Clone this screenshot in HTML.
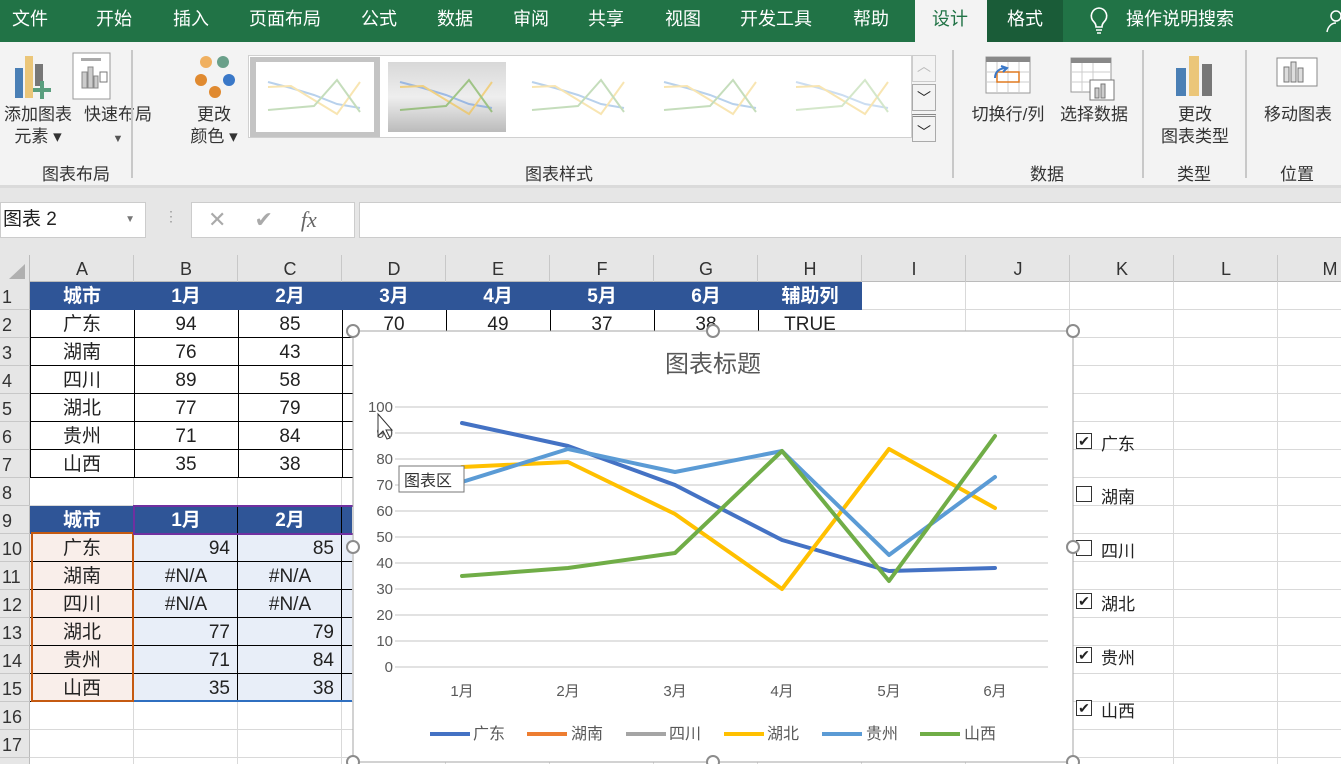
<!DOCTYPE html>
<html><head><meta charset="utf-8">
<style>
*{margin:0;padding:0;box-sizing:border-box}
body{width:1341px;height:764px;overflow:hidden;position:relative;background:#fff;font-family:"Liberation Sans","Noto Sans CJK SC",sans-serif;color:#222}
.a{position:absolute}
.tab{position:absolute;top:0;height:42px;line-height:38px;color:#fff;font-size:18px}
.rb{position:absolute;font-size:17px;color:#333;text-align:center;line-height:22px}
.grp{position:absolute;top:160px;font-size:17px;color:#333}
.sep{position:absolute;top:50px;width:2px;height:128px;background:#c8c8c8}
.ch{position:absolute;top:255px;height:27px;line-height:29px;font-size:18px;color:#333;text-align:center;width:104px}
.rh{position:absolute;left:0;width:30px;height:28px;line-height:30px;font-size:18px;color:#333;padding-left:2px}
.c{position:absolute;height:28px;line-height:29px;font-size:19px;text-align:center;width:104px}
.hd{background:#2f5597;color:#fff;font-weight:bold}
.cb{position:absolute;left:1076px;width:16px;height:16px;border:1px solid #333;background:#fff;font-size:14px;line-height:14px;text-align:center}
.cl{position:absolute;left:1101px;font-size:17px}
</style></head><body>
<!-- top bar -->
<div class="a" style="left:0;top:0;width:1341px;height:42px;background:#217346"></div>
<div class="tab" style="left:12px">文件</div>
<div class="tab" style="left:96px">开始</div>
<div class="tab" style="left:173px">插入</div>
<div class="tab" style="left:249px">页面布局</div>
<div class="tab" style="left:361px">公式</div>
<div class="tab" style="left:437px">数据</div>
<div class="tab" style="left:513px">审阅</div>
<div class="tab" style="left:588px">共享</div>
<div class="tab" style="left:665px">视图</div>
<div class="tab" style="left:740px">开发工具</div>
<div class="tab" style="left:853px">帮助</div>
<div class="a" style="left:915px;top:0;width:72px;height:42px;background:#f3f3f3"></div>
<div class="tab" style="left:932px;color:#217346">设计</div>
<div class="a" style="left:987px;top:0;width:76px;height:42px;background:#1a5c38"></div>
<div class="tab" style="left:1007px">格式</div>
<svg class="a" style="left:1088px;top:6px" width="22" height="30"><path d="M11 2a8 8 0 0 0-5 14c1 1 2 3 2 5h6c0-2 1-4 2-5a8 8 0 0 0-5-14zM8 24h6M9 27h4" fill="none" stroke="#fff" stroke-width="1.6"/></svg>
<div class="tab" style="left:1126px">操作说明搜索</div>
<svg class="a" style="left:1326px;top:8px" width="15" height="26"><circle cx="10" cy="8" r="5" fill="none" stroke="#fff" stroke-width="1.5"/><path d="M1 24c1-6 5-9 9-9" fill="none" stroke="#fff" stroke-width="1.5"/></svg>
<!-- ribbon -->
<div class="a" style="left:0;top:42px;width:1341px;height:143px;background:#f3f3f3"></div>
<div class="a" style="left:0;top:185px;width:1341px;height:3px;background:#dadada"></div>
<svg class="a" style="left:14px;top:54px" width="40" height="48"><rect x="1" y="14" width="8" height="30" fill="#4a7fb5"/><rect x="11" y="2" width="8" height="42" fill="#ebc679"/><rect x="21" y="10" width="8" height="22" fill="#777"/><rect x="26" y="27" width="4" height="18" fill="#5a9e7e"/><rect x="19" y="34" width="18" height="4" fill="#5a9e7e"/></svg>
<svg class="a" style="left:72px;top:52px" width="40" height="48"><rect x="1" y="1" width="37" height="46" fill="#fff" stroke="#999"/><rect x="9" y="6" width="20" height="3" fill="#aaa"/><rect x="10" y="20" width="5" height="16" fill="#ccc" stroke="#888"/><rect x="16" y="15" width="5" height="21" fill="#ccc" stroke="#888"/><rect x="22" y="24" width="4" height="12" fill="#ccc" stroke="#888"/><rect x="28" y="20" width="7" height="10" fill="#fff" stroke="#777"/></svg>
<div class="rb" style="left:2px;top:104px;width:72px">添加图表<br>元素 ▾</div>
<div class="rb" style="left:80px;top:104px;width:76px">快速布局<br><span style="font-size:11px;color:#555">▼</span></div>
<div class="grp" style="left:42px">图表布局</div>
<div class="sep" style="left:130px;left:131px"></div>
<svg class="a" style="left:190px;top:54px" width="48" height="45"><circle cx="16" cy="8" r="6" fill="#f0b060"/><circle cx="33" cy="8" r="6" fill="#6aa08a"/><circle cx="11" cy="26" r="6" fill="#e08a30"/><circle cx="39" cy="26" r="6" fill="#3a78c8"/><circle cx="25" cy="38" r="6" fill="#e08a30"/></svg>
<div class="rb" style="left:184px;top:104px;width:60px">更改<br>颜色 ▾</div>
<div class="a" style="left:248px;top:55px;width:664px;height:83px;background:#fff;border:1px solid #d0d0d0"></div>
<div class="a" style="left:250px;top:57px;width:130px;height:80px;background:#c4c4c4"></div>
<div class="a" style="left:256px;top:62px;width:118px;height:70px;background:#fff"></div>
<div class="a" style="left:388px;top:62px;width:118px;height:70px;background:linear-gradient(#d8d8d8,#eee,#bbb)"></div>
<svg class="a" style="left:256px;top:62px" width="640" height="70">
<g fill="none" stroke-width="2" opacity=".6">
<g><path d="M12 20 35 26 58 33 81 42 104 46" stroke="#8ab4e0"/><path d="M12 25 35 24 58 38 81 52 104 20" stroke="#f5d580"/><path d="M12 48 35 46 58 44 81 18 104 50" stroke="#a0c890"/></g>
<g transform="translate(132 0)"><path d="M12 20 35 26 58 33 81 42 104 46" stroke="#6a9ae0"/><path d="M12 25 35 24 58 38 81 52 104 20" stroke="#f5c040"/><path d="M12 48 35 46 58 44 81 18 104 50" stroke="#70ad47"/></g>
<g transform="translate(264 0)"><path d="M12 20 35 26 58 33 81 42 104 46" stroke="#8ab4e0"/><path d="M12 25 35 24 58 38 81 52 104 20" stroke="#f5d580"/><path d="M12 48 35 46 58 44 81 18 104 50" stroke="#a0c890"/></g>
<g transform="translate(396 0)"><path d="M12 20 35 26 58 33 81 42 104 46" stroke="#8ab4e0"/><path d="M12 25 35 24 58 38 81 52 104 20" stroke="#f5d580"/><path d="M12 48 35 46 58 44 81 18 104 50" stroke="#a0c890"/></g>
<g transform="translate(528 0)"><path d="M12 20 35 26 58 33 81 42 104 46" stroke="#aac8e8"/><path d="M12 25 35 24 58 38 81 52 104 20" stroke="#f5d580"/><path d="M12 48 35 46 58 44 81 18 104 50" stroke="#b8d8a8"/></g>
</g></svg>
<div class="a" style="left:912px;top:55px;width:24px;height:27px;border:1px solid #ccc;background:#f3f3f3;color:#bbb;text-align:center;font-size:14px">︿</div>
<div class="a" style="left:912px;top:84px;width:24px;height:27px;border:1px solid #aaa;background:#f3f3f3;text-align:center;font-size:14px;line-height:26px">﹀</div>
<div class="a" style="left:912px;top:114px;width:24px;height:28px;border:1px solid #aaa;background:#f3f3f3;text-align:center;font-size:14px;line-height:30px;border-top:3px double #888">﹀</div>
<div class="grp" style="left:525px">图表样式</div>
<div class="sep" style="left:952px"></div>
<svg class="a" style="left:985px;top:56px" width="48" height="40"><rect x="1" y="1" width="44" height="36" fill="#fff" stroke="#999"/><rect x="1" y="1" width="44" height="5" fill="#888"/><path d="M1 16h44M1 26h44M12 6v31M23 6v31M34 6v31" stroke="#ccc"/><rect x="12" y="16" width="22" height="10" fill="none" stroke="#e07a20" stroke-width="1.5"/><path d="M10 22c0-6 4-10 12-10M16 10l6 2-4 4" fill="none" stroke="#3a78c8" stroke-width="2"/></svg>
<svg class="a" style="left:1070px;top:56px" width="48" height="46"><rect x="1" y="2" width="40" height="34" fill="#fff" stroke="#999"/><rect x="1" y="2" width="40" height="5" fill="#888"/><path d="M1 16h40M1 26h40M12 7v29M23 7v29" stroke="#ccc"/><rect x="20" y="24" width="24" height="20" fill="#fff" stroke="#777"/><rect x="25" y="32" width="4" height="10" fill="#ccc" stroke="#777"/><rect x="31" y="28" width="4" height="14" fill="#ccc" stroke="#777"/></svg>
<div class="rb" style="left:966px;top:104px;width:84px">切换行/列</div>
<div class="rb" style="left:1054px;top:104px;width:80px">选择数据</div>
<div class="grp" style="left:1030px">数据</div>
<div class="sep" style="left:1142px"></div>
<svg class="a" style="left:1175px;top:56px" width="40" height="40"><rect x="1" y="12" width="10" height="28" fill="#4a7fb5"/><rect x="14" y="0" width="10" height="40" fill="#ebc679"/><rect x="27" y="8" width="10" height="32" fill="#777"/></svg>
<div class="rb" style="left:1155px;top:104px;width:80px">更改<br>图表类型</div>
<div class="grp" style="left:1177px">类型</div>
<div class="sep" style="left:1245px"></div>
<svg class="a" style="left:1276px;top:57px" width="44" height="36"><rect x="1" y="1" width="40" height="28" fill="#fff" stroke="#888"/><rect x="8" y="10" width="5" height="15" fill="#ddd" stroke="#777"/><rect x="15" y="5" width="5" height="20" fill="#ddd" stroke="#777"/><rect x="22" y="11" width="5" height="14" fill="#ddd" stroke="#777"/></svg>
<div class="rb" style="left:1258px;top:104px;width:80px">移动图表</div>
<div class="grp" style="left:1280px">位置</div>
<!-- formula bar -->
<div class="a" style="left:0;top:188px;width:1341px;height:67px;background:#e6e6e6"></div>
<div class="a" style="left:0;top:202px;width:146px;height:36px;background:#fff;border:1px solid #ccc;font-size:19px;line-height:34px;padding-left:2px">图表 2<span style="position:absolute;right:10px;font-size:10px;color:#777">▼</span></div>
<div class="a" style="left:164px;top:208px;color:#999;font-size:14px">⋮</div>
<div class="a" style="left:191px;top:202px;width:164px;height:36px;background:#fff;border:1px solid #ccc;color:#aaa;font-size:22px;line-height:34px"><span style="margin-left:16px">✕</span><span style="margin-left:28px">✔</span><i style="margin-left:28px;font-family:'Liberation Serif',serif;color:#666">fx</i></div>
<div class="a" style="left:359px;top:202px;width:990px;height:36px;background:#fff;border:1px solid #ccc"></div>
<!-- headers -->
<div class="a" style="left:0;top:255px;width:1341px;height:27px;background:#e6e6e6;border-bottom:1px solid #bbb"></div>
<div class="a" style="left:0;top:255px;width:30px;height:509px;background:#e6e6e6;border-right:1px solid #bbb"></div>
<svg class="a" style="left:6px;top:262px" width="20" height="18"><path d="M19 2V17H3Z" fill="#b0b0b0"/></svg>
<div class="ch" style="left:30px">A</div><div class="ch" style="left:134px">B</div><div class="ch" style="left:238px">C</div><div class="ch" style="left:342px">D</div><div class="ch" style="left:446px">E</div><div class="ch" style="left:550px">F</div><div class="ch" style="left:654px">G</div><div class="ch" style="left:758px">H</div><div class="ch" style="left:862px">I</div><div class="ch" style="left:966px">J</div><div class="ch" style="left:1070px">K</div><div class="ch" style="left:1174px">L</div><div class="ch" style="left:1278px">M</div>
<div class="a" style="left:30px;top:255px;width:1311px;height:27px;background:repeating-linear-gradient(90deg,transparent 0 103px,#c8c8c8 103px 104px)"></div>
<div class="rh" style="top:282px">1</div><div class="rh" style="top:310px">2</div><div class="rh" style="top:338px">3</div><div class="rh" style="top:366px">4</div><div class="rh" style="top:394px">5</div><div class="rh" style="top:422px">6</div><div class="rh" style="top:450px">7</div><div class="rh" style="top:478px">8</div><div class="rh" style="top:506px">9</div><div class="rh" style="top:534px">10</div><div class="rh" style="top:562px">11</div><div class="rh" style="top:590px">12</div><div class="rh" style="top:618px">13</div><div class="rh" style="top:646px">14</div><div class="rh" style="top:674px">15</div><div class="rh" style="top:702px">16</div><div class="rh" style="top:730px">17</div>
<div class="a" style="left:0;top:282px;width:30px;height:482px;background:repeating-linear-gradient(180deg,transparent 0 27px,#c8c8c8 27px 28px)"></div>
<!-- grid -->
<div class="a" style="left:30px;top:282px;width:1311px;height:482px;background:repeating-linear-gradient(90deg,transparent 0 103px,#d9d9d9 103px 104px),repeating-linear-gradient(180deg,transparent 0 27px,#d9d9d9 27px 28px)"></div>
<!-- table 1 -->
<div class="a" style="left:30px;top:282px;width:832px;height:28px;background:#2f5597"></div>
<div class="a" style="left:30px;top:310px;width:832px;height:168px;background:#fff;background-image:repeating-linear-gradient(90deg,transparent 0 103px,#000 103px 104px),repeating-linear-gradient(180deg,transparent 0 27px,#000 27px 28px);border-left:1px solid #000"></div>
<div class="a" style="left:30px;top:282px;width:832px;height:28px;background-image:repeating-linear-gradient(90deg,transparent 0 103px,#000 103px 104px)"></div>
<div class="c hd" style="left:30px;top:282px">城市</div><div class="c hd" style="left:134px;top:282px">1月</div><div class="c hd" style="left:238px;top:282px">2月</div><div class="c hd" style="left:342px;top:282px">3月</div><div class="c hd" style="left:446px;top:282px">4月</div><div class="c hd" style="left:550px;top:282px">5月</div><div class="c hd" style="left:654px;top:282px">6月</div><div class="c hd" style="left:758px;top:282px">辅助列</div>
<div class="c" style="left:30px;top:310px">广东</div><div class="c" style="left:134px;top:310px">94</div><div class="c" style="left:238px;top:310px">85</div><div class="c" style="left:342px;top:310px">70</div><div class="c" style="left:446px;top:310px">49</div><div class="c" style="left:550px;top:310px">37</div><div class="c" style="left:654px;top:310px">38</div><div class="c" style="left:758px;top:310px">TRUE</div>
<div class="c" style="left:30px;top:338px">湖南</div><div class="c" style="left:134px;top:338px">76</div><div class="c" style="left:238px;top:338px">43</div>
<div class="c" style="left:30px;top:366px">四川</div><div class="c" style="left:134px;top:366px">89</div><div class="c" style="left:238px;top:366px">58</div>
<div class="c" style="left:30px;top:394px">湖北</div><div class="c" style="left:134px;top:394px">77</div><div class="c" style="left:238px;top:394px">79</div>
<div class="c" style="left:30px;top:422px">贵州</div><div class="c" style="left:134px;top:422px">71</div><div class="c" style="left:238px;top:422px">84</div>
<div class="c" style="left:30px;top:450px">山西</div><div class="c" style="left:134px;top:450px">35</div><div class="c" style="left:238px;top:450px">38</div>
<!-- table 2 -->
<div class="a" style="left:30px;top:506px;width:322px;height:28px;background:#2f5597;background-image:repeating-linear-gradient(90deg,transparent 0 103px,#000 103px 104px)"></div>
<div class="a" style="left:30px;top:534px;width:104px;height:168px;background:#f9eeea"></div>
<div class="a" style="left:134px;top:534px;width:218px;height:168px;background:#e8eef8"></div>
<div class="a" style="left:30px;top:534px;width:322px;height:168px;background-image:repeating-linear-gradient(90deg,transparent 0 103px,#000 103px 104px),repeating-linear-gradient(180deg,transparent 0 27px,#000 27px 28px)"></div>
<div class="a" style="left:31px;top:532px;width:103px;height:170px;border:2px solid #c55a11"></div>
<div class="a" style="left:133px;top:505px;width:220px;height:30px;border:2px solid #7030a0;border-right:none"></div>
<div class="a" style="left:134px;top:700px;width:218px;height:2px;background:#2f6fc0"></div>
<div class="c hd" style="left:30px;top:506px;background:none">城市</div><div class="c hd" style="left:134px;top:506px;background:none">1月</div><div class="c hd" style="left:238px;top:506px;background:none">2月</div>
<div class="c" style="left:30px;top:534px">广东</div><div class="c" style="left:134px;top:534px;text-align:right;padding-right:8px">94</div><div class="c" style="left:238px;top:534px;text-align:right;padding-right:8px">85</div>
<div class="c" style="left:30px;top:562px">湖南</div><div class="c" style="left:134px;top:562px">#N/A</div><div class="c" style="left:238px;top:562px">#N/A</div>
<div class="c" style="left:30px;top:590px">四川</div><div class="c" style="left:134px;top:590px">#N/A</div><div class="c" style="left:238px;top:590px">#N/A</div>
<div class="c" style="left:30px;top:618px">湖北</div><div class="c" style="left:134px;top:618px;text-align:right;padding-right:8px">77</div><div class="c" style="left:238px;top:618px;text-align:right;padding-right:8px">79</div>
<div class="c" style="left:30px;top:646px">贵州</div><div class="c" style="left:134px;top:646px;text-align:right;padding-right:8px">71</div><div class="c" style="left:238px;top:646px;text-align:right;padding-right:8px">84</div>
<div class="c" style="left:30px;top:674px">山西</div><div class="c" style="left:134px;top:674px;text-align:right;padding-right:8px">35</div><div class="c" style="left:238px;top:674px;text-align:right;padding-right:8px">38</div>
<!-- checkboxes -->
<div class="cb" style="top:433px">✔</div><div class="cl" style="top:430px">广东</div>
<div class="cb" style="top:486px"></div><div class="cl" style="top:483px">湖南</div>
<div class="cb" style="top:540px"></div><div class="cl" style="top:537px">四川</div>
<div class="cb" style="top:593px">✔</div><div class="cl" style="top:590px">湖北</div>
<div class="cb" style="top:647px">✔</div><div class="cl" style="top:644px">贵州</div>
<div class="cb" style="top:700px">✔</div><div class="cl" style="top:697px">山西</div>
<!-- chart -->
<svg class="a" style="left:0;top:0" width="1341" height="764" font-family="Liberation Sans,Noto Sans CJK SC,sans-serif">
<rect x="353" y="331" width="720" height="431" fill="#fff" stroke="#a6a6a6"/>
<text x="713" y="372" font-size="24" fill="#595959" text-anchor="middle">图表标题</text>
<g stroke="#d9d9d9" stroke-width="1.5">
<path d="M395 407H1048M395 433H1048M395 459H1048M395 485H1048M395 511H1048M395 537H1048M395 563H1048M395 589H1048M395 615H1048M395 641H1048M395 667H1048"/>
</g>
<g font-size="15" fill="#595959" text-anchor="end">
<text x="393" y="412">100</text><text x="393" y="438">90</text><text x="393" y="464">80</text><text x="393" y="490">70</text><text x="393" y="516">60</text><text x="393" y="542">50</text><text x="393" y="568">40</text><text x="393" y="594">30</text><text x="393" y="620">20</text><text x="393" y="646">10</text><text x="393" y="672">0</text>
</g>
<g font-size="15" fill="#595959" text-anchor="middle">
<text x="462" y="696">1月</text><text x="568" y="696">2月</text><text x="675" y="696">3月</text><text x="782" y="696">4月</text><text x="889" y="696">5月</text><text x="995" y="696">6月</text>
</g>
<g fill="none" stroke-width="4" stroke-linejoin="round" stroke-linecap="round">
<path d="M462 423 568 446 675 485 782 540 889 571 995 568" stroke="#4472c4"/>
<path d="M462 467 568 462 675 514 782 589 889 449 995 508" stroke="#ffc000"/>
<path d="M462 482 568 449 675 472 782 451 889 555 995 477" stroke="#5b9bd5"/>
<path d="M462 576 568 568 675 553 782 451 889 581 995 436" stroke="#70ad47"/>
</g>
<rect x="399" y="466" width="65" height="26" fill="#fff" stroke="#777"/>
<text x="404" y="486" font-size="16" fill="#333">图表区</text>
<path d="M378 414v22l5-5 4 8 3-1-4-8h6z" fill="#fff" stroke="#333" stroke-width="1"/>
<g stroke-width="4">
<path d="M430 734h40" stroke="#4472c4"/><path d="M527 734h40" stroke="#ed7d31"/><path d="M626 734h40" stroke="#a5a5a5"/><path d="M724 734h40" stroke="#ffc000"/><path d="M822 734h40" stroke="#5b9bd5"/><path d="M920 734h40" stroke="#70ad47"/>
</g>
<g font-size="16" fill="#595959">
<text x="473" y="739">广东</text><text x="571" y="739">湖南</text><text x="669" y="739">四川</text><text x="767" y="739">湖北</text><text x="866" y="739">贵州</text><text x="964" y="739">山西</text>
</g>
<g fill="#fff" stroke="#8c8c8c" stroke-width="2">
<circle cx="353" cy="331" r="6"/><circle cx="713" cy="331" r="6"/><circle cx="1073" cy="331" r="6"/><circle cx="353" cy="547" r="6"/><circle cx="1073" cy="547" r="6"/><circle cx="353" cy="762" r="6"/><circle cx="713" cy="762" r="6"/><circle cx="1073" cy="762" r="6"/>
</g>
</svg>
</body></html>
